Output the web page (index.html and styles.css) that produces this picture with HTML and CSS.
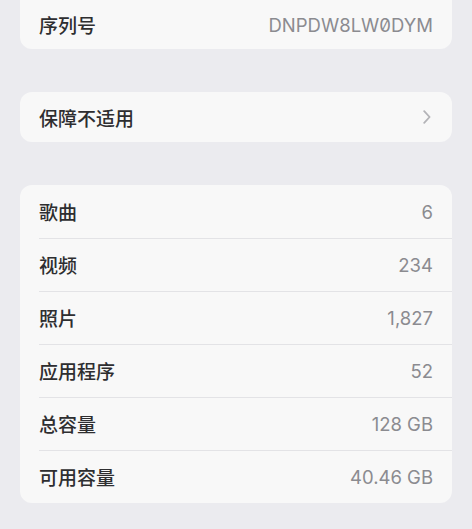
FILE: index.html
```html
<!DOCTYPE html>
<html lang="zh-CN">
<head>
<meta charset="utf-8">
<link rel="stylesheet" href="styles.css">
</head>
<body>
<div class="page">
  <div class="card card-top">
    <div class="row row-top">
      <span class="label">序列号</span>
      <span class="value serial">DNPDW8LW0DYM</span>
    </div>
  </div>

  <div class="card">
    <div class="row row-short">
      <span class="label">保障不适用</span>
      <svg class="chevron" width="8" height="14" viewBox="0 0 8 14"><path d="M1.2 1.2 L6.6 7 L1.2 12.8" fill="none" stroke="#b3b3b7" stroke-width="1.8" stroke-linecap="round" stroke-linejoin="round"/></svg>
    </div>
  </div>

  <div class="card">
    <div class="row"><span class="label">歌曲</span><span class="value">6</span></div>
    <div class="row"><span class="label">视频</span><span class="value">234</span></div>
    <div class="row"><span class="label">照片</span><span class="value">1,827</span></div>
    <div class="row"><span class="label">应用程序</span><span class="value">52</span></div>
    <div class="row"><span class="label">总容量</span><span class="value">128 GB</span></div>
    <div class="row"><span class="label">可用容量</span><span class="value">40.46 GB</span></div>
  </div>
</div>
</body>
</html>
```

FILE: styles.css
```css
html, body {
  margin: 0;
  padding: 0;
  background: #ebebef;
}

.page {
  width: 472px;
  height: 529px;
  overflow: hidden;
  padding: 0 20px;
  box-sizing: border-box;
  display: flex;
  flex-direction: column;
  gap: 43px;
}

.card {
  background: #f8f8f8;
  border-radius: 12px;
  overflow: hidden;
  display: flex;
  flex-direction: column;
  flex-shrink: 0;
}

.card-top {
  border-radius: 0 0 12px 12px;
}

.row {
  position: relative;
  height: 53px;
  display: flex;
  align-items: center;
  justify-content: space-between;
  padding: 0 19px;
}

.row-top {
  height: 49px;
}

.row-short {
  height: 50px;
}

.row + .row::before {
  content: "";
  position: absolute;
  top: 0;
  left: 19px;
  right: 0;
  height: 1px;
  background: #e3e3e6;
}

.label {
  font-family: "Noto Sans CJK SC", "Noto Sans", sans-serif;
  font-size: 19px;
  font-weight: 500;
  color: #2e2e30;
}

.value {
  font-family: Inter, "Noto Sans", sans-serif;
  font-size: 18.5px;
  color: #8b8b90;
}

.serial {
  font-variant-numeric: slashed-zero;
  font-feature-settings: "zero" 1;
}

.chevron {
  margin-right: 2px;
}
```
